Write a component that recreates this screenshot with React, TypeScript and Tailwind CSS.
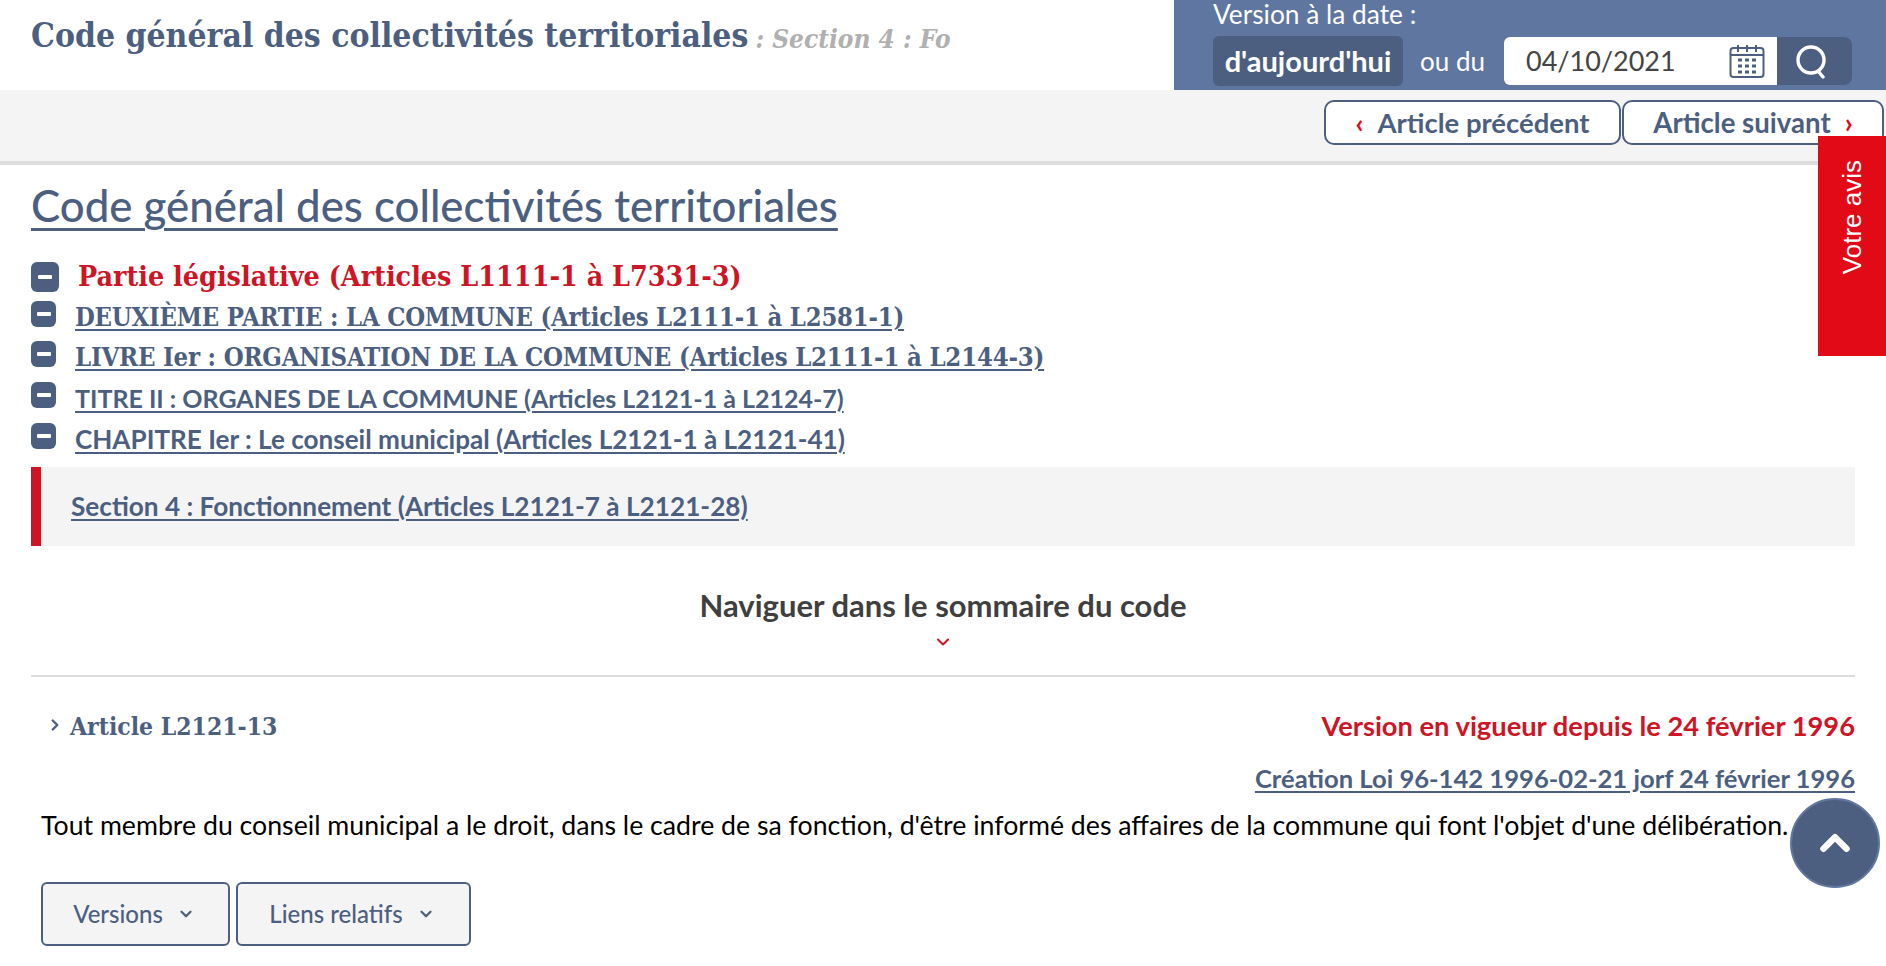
import { ChevronDown, ChevronRight, ChevronUp } from 'lucide-react'

const sans = "font-['Lato','Noto_Sans',sans-serif]"
const slab = "font-['DejaVu_Serif','Liberation_Serif',serif] [font-stretch:condensed]"

function MinusBox({ big }: { big?: boolean }) {
  return (
    <span className={`flex shrink-0 items-center justify-center rounded-[6px] bg-[#4c5f81] ${big ? 'h-[30px] w-[28px]' : 'h-[26px] w-[25px]'}`}>
      <span className="h-[4px] w-[14px] rounded-[1px] bg-white" />
    </span>
  )
}

const treeRows = [
  { label: 'DEUXIÈME PARTIE : LA COMMUNE (Articles L2111-1 à L2581-1)', cls: `${slab} text-[25.4px] font-bold tracking-[-0.2px]`, h: 'h-[40px]' },
  { label: 'LIVRE Ier : ORGANISATION DE LA COMMUNE (Articles L2111-1 à L2144-3)', cls: `${slab} text-[25.5px] font-bold tracking-[-0.2px]`, h: 'h-[41px]' },
  { label: 'TITRE II : ORGANES DE LA COMMUNE (Articles L2121-1 à L2124-7)', cls: `${sans} text-[25px] font-bold`, h: 'h-[41px]' },
  { label: 'CHAPITRE Ier : Le conseil municipal (Articles L2121-1 à L2121-41)', cls: `${sans} text-[26.1px] font-bold`, h: 'h-[40px]' },
]

export default function App() {
  return (
    <div className={`relative h-[966px] w-[1886px] overflow-hidden bg-white ${sans}`}>
      <header className="flex h-[90px]">
        <div className="flex flex-1 items-start whitespace-nowrap pl-[31px] pt-[13px]">
          <span className={`${slab} text-[33.4px] font-bold leading-[46px] text-[#4c5f81]`}>Code général des collectivités territoriales</span>
          <span className={`${slab} ml-[7px] mt-[3px] text-[26px] font-bold italic leading-[46px] text-[#b0b0b0]`}>: Section 4 : Fo</span>
        </div>
        <div className="w-[712px] bg-[#5f76a1] pl-[39px] text-white">
          <div className="h-[36px] text-[26.3px] leading-[28px]">Version à la date :</div>
          <div className="flex items-center">
            <button className="flex h-[50px] w-[190px] items-center justify-center rounded-[6px] bg-[#4c5f81] text-[29px] font-bold">d'aujourd'hui</button>
            <span className="ml-[17px] w-[84px] text-[26px]">ou du</span>
            <div className="flex h-[48px] w-[273px] items-center justify-between rounded-l-[6px] bg-white pl-[22px] pr-[12px] text-[27px] text-[#444]">
              04/10/2021
              <svg viewBox="0 0 36 36" className="h-[36px] w-[36px]" fill="none" stroke="#4c5f81" strokeWidth="2">
                <rect x="1.5" y="5" width="33" height="29" rx="3" />
                <path d="M1.5 12h33M9 2v7M18 2v7M27 2v7" />
                <path d="M9 17h4M16 17h4M23 17h4M9 23h4M16 23h4M23 23h4M9 29h4M16 29h4M23 29h4" strokeWidth="3" />
              </svg>
            </div>
            <button className="flex h-[48px] w-[75px] items-center justify-center rounded-r-[8px] bg-[#4c5f81]">
              <svg viewBox="0 0 36 36" className="-ml-[4px] h-[36px] w-[36px]" fill="none" stroke="white" strokeWidth="3.4" strokeLinecap="round">
                <circle cx="16" cy="17" r="13" />
                <path d="M23 28l5 6" />
              </svg>
            </button>
          </div>
        </div>
      </header>

      <div className="flex h-[75px] justify-end gap-[1px] border-b-[4px] border-[#dddddd] bg-[#f4f4f4] pr-[2px] pt-[10px]">
        <a className="flex h-[45px] w-[297px] items-center justify-center rounded-[10px] border-2 border-[#4c5f81] bg-white text-[27.5px] font-bold text-[#4c5f81]">
          <span className="mr-[14px] text-[#e20a16]">‹</span>Article précédent
        </a>
        <a className="flex h-[45px] w-[262px] items-center justify-center rounded-[10px] border-2 border-[#4c5f81] bg-white text-[27.6px] font-bold text-[#4c5f81]">
          Article suivant<span className="ml-[14px] text-[#e20a16]">›</span>
        </a>
      </div>

      <main className="px-[31px]">
        <h1 className="mt-[14px] h-[73px] text-[43.8px] font-medium leading-[52px] text-[#4c5f81] underline decoration-[3px] underline-offset-[6px]">
          Code général des collectivités territoriales
        </h1>
        <div className="flex h-[49px] items-center">
          <MinusBox big />
          <span className={`${slab} ml-[19px] text-[28.4px] font-bold text-[#ce1525]`}>Partie législative (Articles L1111-1 à L7331-3)</span>
        </div>
        {treeRows.map((row) => (
          <div key={row.label} className={`flex items-start ${row.h}`}>
            <MinusBox />
            <a className={`ml-[19px] leading-[33px] text-[#4c5f81] underline underline-offset-[3px] ${row.cls}`}>{row.label}</a>
          </div>
        ))}
        <div className="mt-[4px] flex h-[79px] items-center border-l-[10px] border-[#ce1525] bg-[#f4f4f4] pl-[30px]">
          <a className="text-[26.2px] font-bold text-[#4c5f81] underline underline-offset-[3px]">Section 4 : Fonctionnement (Articles L2121-7 à L2121-28)</a>
        </div>
        <div className="mt-[40px] text-center text-[31px] font-bold leading-[38px] text-[#3f3f3f]">Naviguer dans le sommaire du code</div>
        <div className="mt-[6px] flex h-[23px] items-center justify-center">
          <ChevronDown className="h-[20px] w-[20px] text-[#ce1525]" strokeWidth={2.5} />
        </div>
        <div className="mt-[22px] h-[2px] bg-[#dddddd]" />
        <div className="mt-[29px] flex h-[42px] items-center justify-between">
          <div className="flex items-center">
            <ChevronRight className="ml-[15px] h-[18px] w-[18px] -translate-y-[2px] text-[#4c5f81]" strokeWidth={3.2} />
            <span className={`${slab} ml-[6px] text-[24.5px] font-bold text-[#4c5f81]`}>Article L2121-13</span>
          </div>
          <span className="-translate-y-[1px] text-[27.3px] font-bold text-[#ce1525]">Version en vigueur depuis le 24 février 1996</span>
        </div>
        <div className="mt-[12px] text-right text-[25.6px] font-bold leading-[36px] text-[#4c5f81] underline underline-offset-[3px]">
          Création Loi 96-142 1996-02-21 jorf 24 février 1996
        </div>
        <p className="mt-[11px] whitespace-nowrap pl-[10px] text-[26.7px] leading-[36px] text-black">
          Tout membre du conseil municipal a le droit, dans le cadre de sa fonction, d'être informé des affaires de la commune qui font l'objet d'une délibération.
        </p>
        <div className="ml-[10px] mt-[39px] flex gap-[6px]">
          <button className="flex h-[64px] w-[189px] items-center justify-center gap-[14px] rounded-[6px] border-2 border-[#4c5f81] bg-[#f4f4f4] pr-[3px] text-[24px] font-medium text-[#4c5f81]">
            Versions <ChevronDown className="h-[18px] w-[18px]" strokeWidth={3} />
          </button>
          <button className="flex h-[64px] w-[235px] items-center justify-center gap-[14px] rounded-[6px] border-2 border-[#4c5f81] bg-[#f4f4f4] pr-[3px] text-[24px] font-medium text-[#4c5f81]">
            Liens relatifs <ChevronDown className="h-[18px] w-[18px]" strokeWidth={3} />
          </button>
        </div>
      </main>

      <div className="absolute right-0 top-[136px] flex h-[220px] w-[68px] items-start justify-center bg-[#e20a16] pt-[24px]">
        <span className="rotate-180 font-['Liberation_Sans',sans-serif] text-[26px] text-white [writing-mode:vertical-rl]">Votre avis</span>
      </div>
      <button className="absolute left-[1790px] top-[798px] flex h-[90px] w-[90px] items-center justify-center rounded-full border-2 border-[#6277a0] bg-[#4c5f81]">
        <ChevronUp className="h-[46px] w-[46px] text-white" strokeWidth={3.4} />
      </button>
    </div>
  )
}
